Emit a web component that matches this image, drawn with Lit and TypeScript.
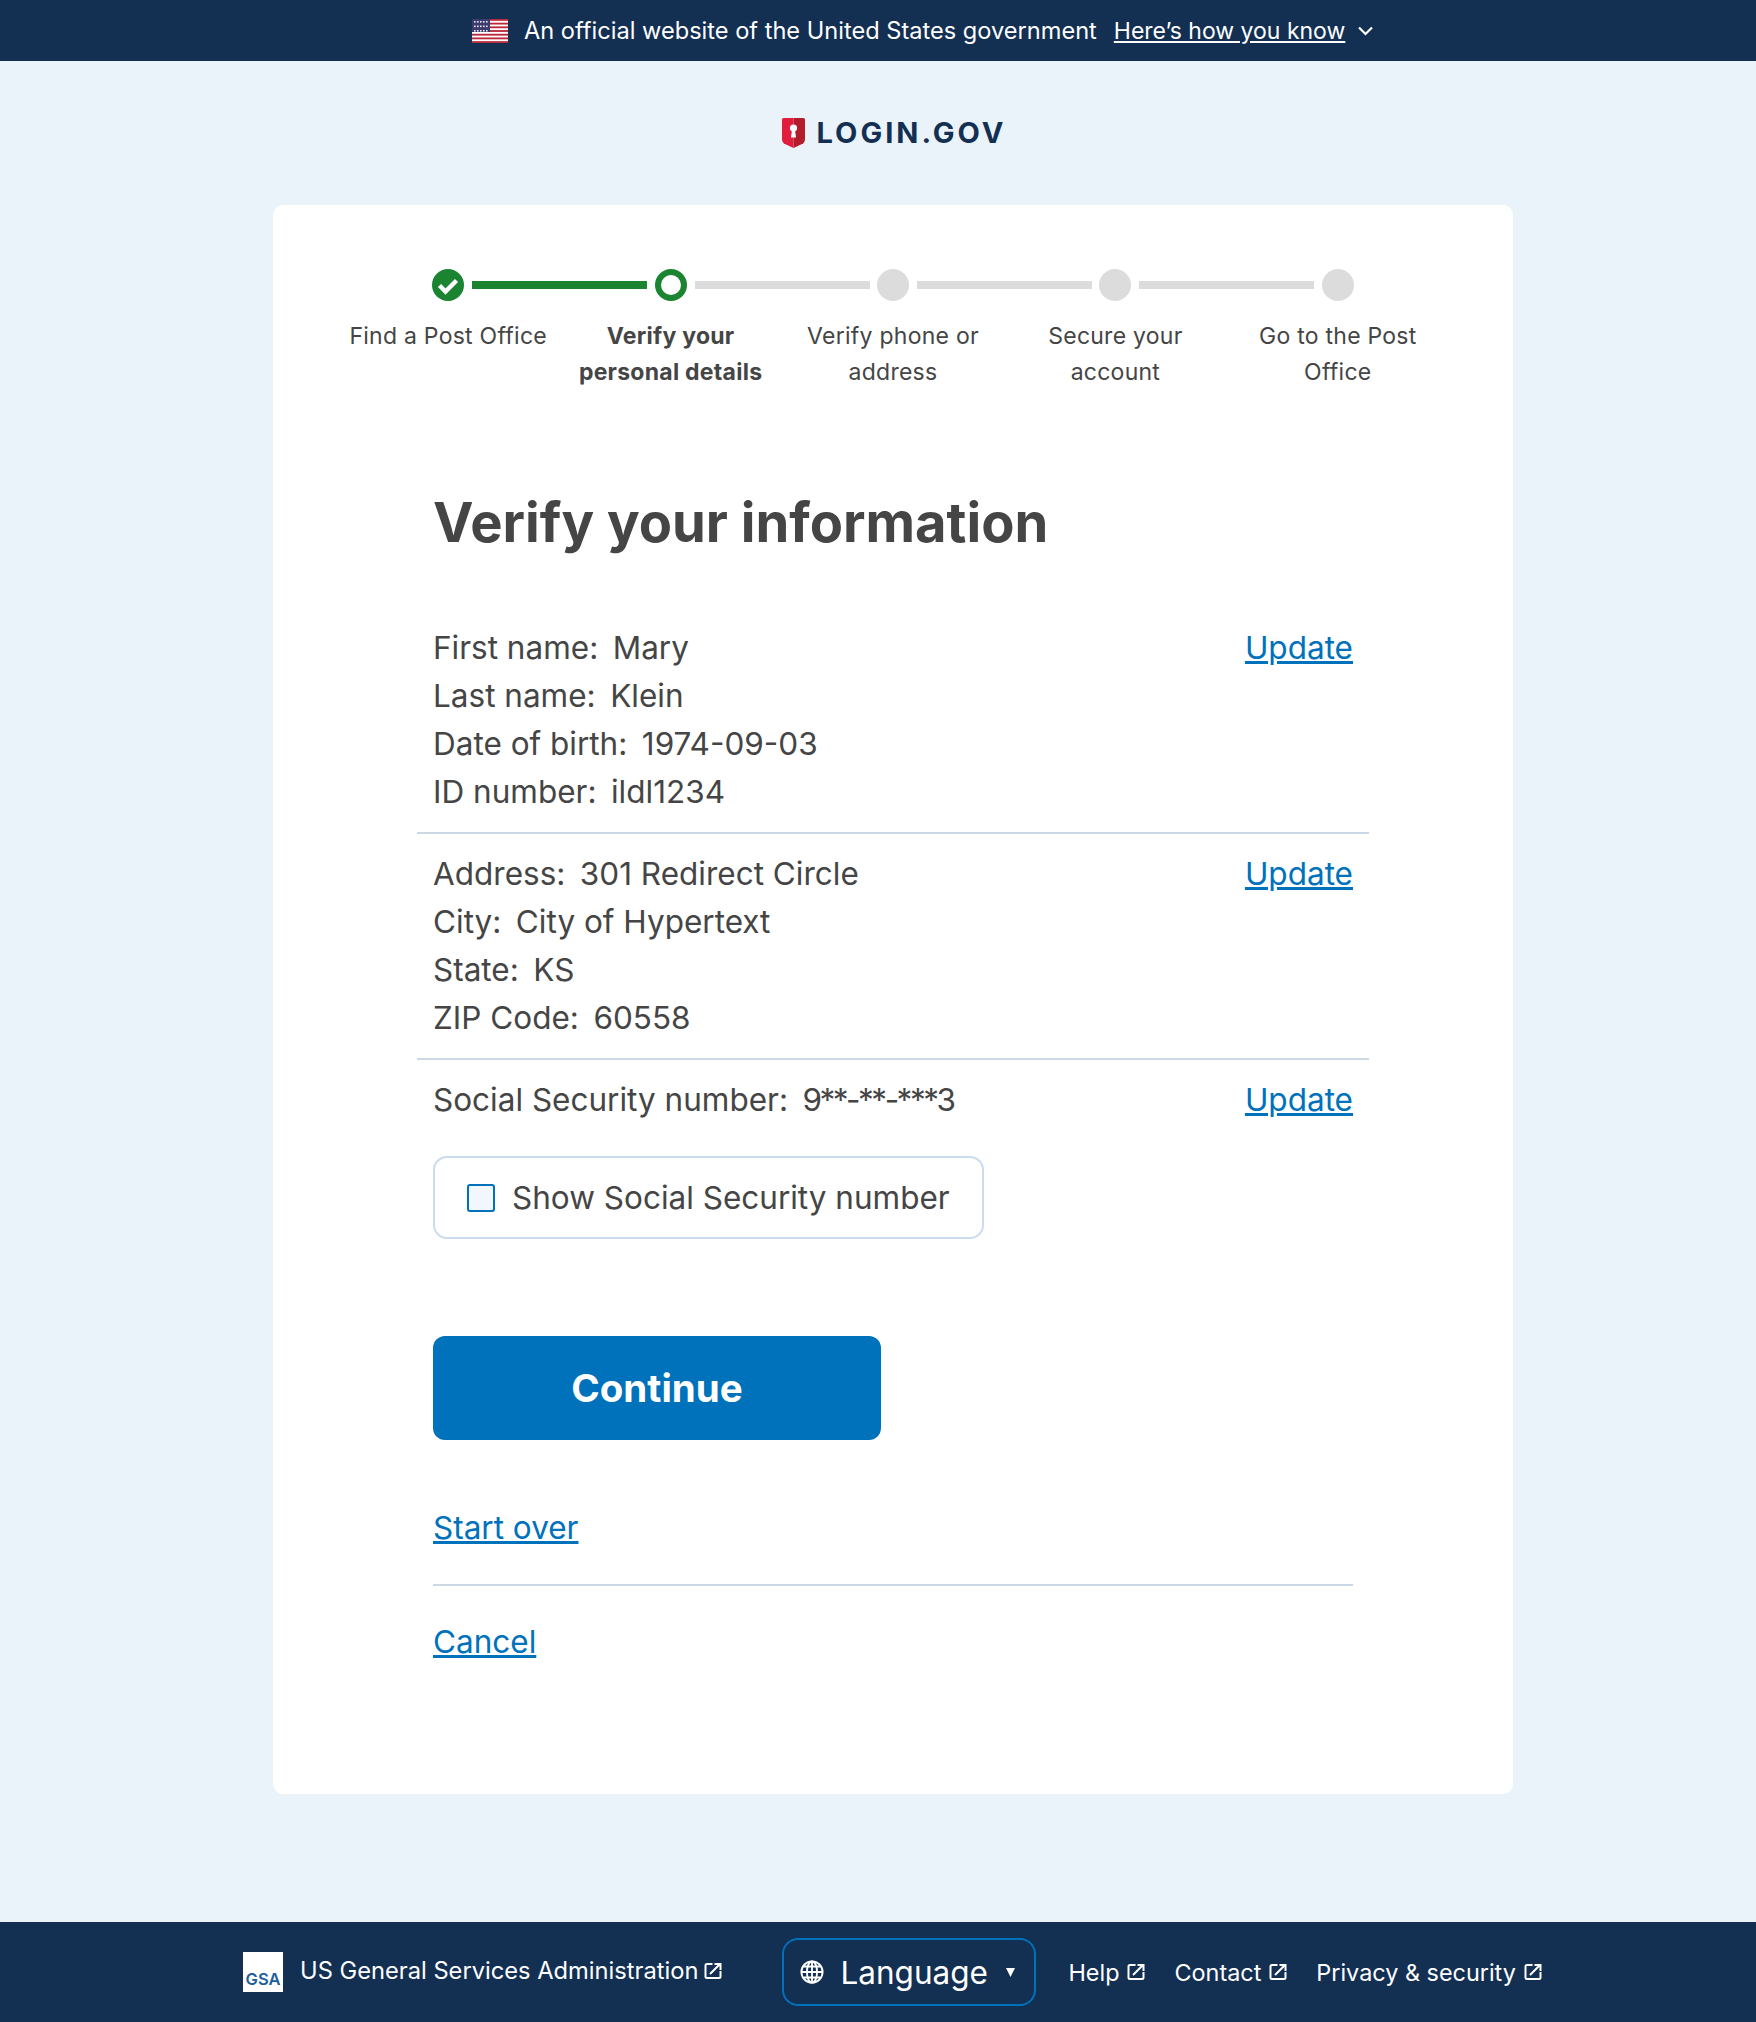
import { LitElement, html, css, svg } from "lit";
import { customElement } from "lit/decorators.js";

const steps = [
  { label: "Find a Post Office", state: "done" },
  { label: "Verify your personal details", state: "current" },
  { label: "Verify phone or address", state: "todo" },
  { label: "Secure your account", state: "todo" },
  { label: "Go to the Post Office", state: "todo" },
];

const sections = [
  [
    ["First name", "Mary"],
    ["Last name", "Klein"],
    ["Date of birth", "1974-09-03"],
    ["ID number", "ildl1234"],
  ],
  [
    ["Address", "301 Redirect Circle"],
    ["City", "City of Hypertext"],
    ["State", "KS"],
    ["ZIP Code", "60558"],
  ],
  [["Social Security number", "9**-**-***3"]],
];

const launch = html`<svg class="ext" viewBox="0 0 18 18" fill="none" stroke="currentColor" stroke-width="2" aria-hidden="true">
  <path d="M8.500 2H3a1.500 1.500 0 0 0-1.500 1.500v11A1.500 1.500 0 0 0 3 16h12a1.500 1.500 0 0 0 1.500-1.500V9" />
  <path d="M6 12 15.500 2.500M10.500 2h6v6" />
</svg>`;

const flagStripes = [0, 2, 4, 6, 8, 10, 12].map(
  (i) => svg`<rect x="0" y=${i * 1.846} width="36" height="1.846" fill="#bb2a3c" />`
);
const flagStars = [2, 6.5, 11].flatMap((y) =>
  [2, 5, 8, 11, 14].map((x) => svg`<rect x=${x} y=${y} width="1.600" height="1.600" fill="#e8e8f0" />`)
);

@customElement("app-root")
export class AppRoot extends LitElement {
  static styles = css`
    :host {
      display: block;
      background: #eaf3fa;
      color: #454545;
      font-family: "Inter", "Liberation Sans", sans-serif;
    }
    a {
      color: #0071bb;
    }
    .banner {
      height: 61px;
      background: #132f52;
      color: #fff;
      display: flex;
      align-items: center;
      padding-left: 472px;
      font-size: 23.6px;
      box-sizing: border-box;
    }
    .flag {
      width: 36px;
      height: 24px;
      margin-right: 16px;
    }
    .banner a {
      color: #fff;
      margin-left: 17px;
      font-size: 23px;
    }
    .chev {
      width: 17px;
      height: 10px;
      margin-left: 12px;
    }
    .logo {
      height: 144px;
      display: flex;
      align-items: center;
      justify-content: center;
      gap: 12px;
      padding-left: 32px;
      box-sizing: border-box;
    }
    .logo svg {
      width: 23px;
      height: 30px;
    }
    .logo span {
      font-size: 29px;
      font-weight: 700;
      letter-spacing: 3px;
      color: #132f52;
      line-height: 1;
      margin-bottom: 2px;
    }
    .card {
      width: 1240px;
      height: 1589px;
      margin-left: 273px;
      background: #fff;
      border-radius: 10px;
      padding: 64px 64px 0;
      box-sizing: border-box;
    }
    .steps {
      display: grid;
      grid-template-columns: repeat(5, 1fr);
    }
    .step {
      text-align: center;
      font-size: 23px;
      letter-spacing: 0.25px;
      line-height: 36px;
      position: relative;
    }
    .dot {
      width: 32px;
      height: 32px;
      border-radius: 50%;
      margin: 0 auto 16px;
      background: #dcdcdc;
      box-sizing: border-box;
      display: block;
    }
    .step.done .dot {
      background: #1a8431;
    }
    .step.current .dot {
      background: #fff;
      border: 6px solid #1a8431;
    }
    .step.current .label {
      font-weight: 700;
    }
    .bar {
      position: absolute;
      top: 12px;
      left: calc(50% + 24px);
      width: 175px;
      height: 8px;
      background: #dcdcdc;
    }
    .step.done .bar {
      background: #1a8431;
    }
    .label {
      padding: 1px 8px 0;
    }
    .step:nth-child(1) .label {
      padding: 1px 0 0;
      white-space: nowrap;
    }
    .content {
      margin: 0 0 0 96px;
      width: 920px;
    }
    h1 {
      margin: 0;
      padding-top: 97px;
      font-size: 54.3px;
      line-height: 70px;
      font-weight: 700;
      color: #454545;
      height: 105px;
    }
    .rows {
      margin: 0 -16px;
      font-size: 31.5px;
      line-height: 48px;
      padding-top: 16px;
    }
    .row {
      display: flex;
      justify-content: space-between;
      padding: 16px;
      border-bottom: 2px solid #cbd9e6;
    }
    .row:last-child {
      border-bottom: 0;
    }
    .pair span {
      margin-left: 14.500px;
    }
    .pair span.mask {
      letter-spacing: -2.5px;
    }
    .check {
      width: 551px;
      height: 83px;
      margin-top: 16px;
      border: 2px solid #cbdcee;
      border-radius: 14px;
      box-sizing: border-box;
      display: flex;
      align-items: center;
      padding-left: 32px;
      font-size: 31.5px;
    }
    .box {
      width: 28px;
      height: 28px;
      border: 2px solid #0071bb;
      border-radius: 3px;
      background: #f1f7fd;
      box-sizing: border-box;
      margin-right: 17px;
    }
    .continue {
      width: 448px;
      height: 104px;
      margin-top: 97px;
      background: #0071bb;
      color: #fff;
      border-radius: 12px;
      display: flex;
      align-items: center;
      justify-content: center;
      font-size: 38.5px;
      font-weight: 700;
    }
    .links {
      font-size: 31.5px;
      line-height: 48px;
      padding-top: 64px;
    }
    .links div + div {
      margin-top: 32px;
      padding-top: 32px;
      border-top: 2px solid #cbd9e6;
    }
    footer {
      margin-top: 128px;
      height: 100px;
      background: #132f52;
      color: #fff;
      display: flex;
      align-items: center;
      padding-left: 243px;
      box-sizing: border-box;
      font-size: 23.4px;
    }
    footer .item {
      display: flex;
      align-items: center;
      gap: 8px;
    }
    footer .item.agency {
      margin-bottom: 3px;
      font-size: 23.7px;
      gap: 6px;
    }
    .ext {
      width: 18px;
      height: 18px;
      flex: none;
    }
    .gsa {
      width: 40px;
      height: 40px;
      padding-bottom: 2px;
      background: #fff;
      color: #1d5f9c;
      font-size: 16.5px;
      font-weight: 600;
      display: flex;
      align-items: flex-end;
      justify-content: center;
      line-height: 21px;
      margin-right: 17px;
      box-sizing: border-box;
    }
    .lang {
      width: 254px;
      height: 68px;
      margin: 0 32px 0 60px;
      border: 2px solid #0071bb;
      border-radius: 16px;
      box-sizing: border-box;
      display: flex;
      align-items: center;
      padding-left: 16px;
      font-size: 31.5px;
    }
    .lang svg.globe {
      width: 24px;
      height: 24px;
      margin-right: 16px;
    }
    .caret {
      width: 9px;
      height: 9px;
      margin-left: 18px;
    }
    .gap {
      margin-left: 29px;
    }
  `;

  render() {
    return html`
      <div class="banner">
        <svg class="flag" viewBox="0 0 36 24">
          <rect width="36" height="24" fill="#fff" />
          ${flagStripes}
          <rect width="18" height="13" fill="#3c3b6e" />
          ${flagStars}
        </svg>
        An official website of the United States government
        <a href="#">Here’s how you know</a>
        <svg class="chev" viewBox="0 0 17 10" fill="none" stroke="#fff" stroke-width="2.200"><path d="M2 1.500 8.500 8 15 1.500" /></svg>
      </div>

      <div class="logo">
        <svg viewBox="0 0 23 30">
          <path d="M1.500 0H11.500V30L3 26Q0 24.500 0 21V1.500Q0 0 1.500 0Z" fill="#e21c3d" />
          <path d="M11.500 0H21.500Q23 0 23 1.500V21Q23 24.500 20 26L11.500 30Z" fill="#b31d2b" />
          <circle cx="11.500" cy="10" r="3.600" fill="#fff" />
          <path d="M10 12h3l1 7.500h-5z" fill="#fff" />
        </svg>
        <span>LOGIN.GOV</span>
      </div>

      <div class="card">
        <div class="steps">
          ${steps.map(
            (s, i) => html`<div class="step ${s.state}">
              ${s.state === "done"
                ? html`<svg class="dot" viewBox="0 0 32 32"><path d="M7.500 16.500 13.500 22.500 24.500 11.500" fill="none" stroke="#fff" stroke-width="4.500" /></svg>`
                : html`<div class="dot"></div>`}
              ${i < steps.length - 1 ? html`<div class="bar"></div>` : ""}
              <div class="label">${s.label}</div>
            </div>`
          )}
        </div>

        <div class="content">
          <h1>Verify your information</h1>
          <div class="rows">
            ${sections.map(
              (rows) => html`<div class="row">
                <div>
                  ${rows.map(
                    ([k, v]) => html`<div class="pair">${k}:<span class=${v.includes("*") ? "mask" : ""}>${v}</span></div>`
                  )}
                </div>
                <a href="#">Update</a>
              </div>`
            )}
          </div>
          <div class="check"><div class="box"></div>Show Social Security number</div>
          <div class="continue">Continue</div>
          <div class="links">
            <div><a href="#">Start over</a></div>
            <div><a href="#">Cancel</a></div>
          </div>
        </div>
      </div>

      <footer>
        <div class="gsa">GSA</div>
        <div class="item agency">US General Services Administration ${launch}</div>
        <div class="lang">
          <svg class="globe" viewBox="0 0 26 26" fill="none" stroke="#fff" stroke-width="2">
            <circle cx="13" cy="13" r="11.500" />
            <ellipse cx="13" cy="13" rx="5.500" ry="11.500" />
            <path d="M13 1.500v23M1.500 13h23M3.500 7h19M3.500 19h19" />
          </svg>
          Language
          <svg class="caret" viewBox="0 0 9 9"><path d="M0 0h9L4.500 9z" fill="#fff" /></svg>
        </div>
        <div class="item">Help ${launch}</div>
        <div class="item gap">Contact ${launch}</div>
        <div class="item gap">Privacy &amp; security ${launch}</div>
      </footer>
    `;
  }
}
